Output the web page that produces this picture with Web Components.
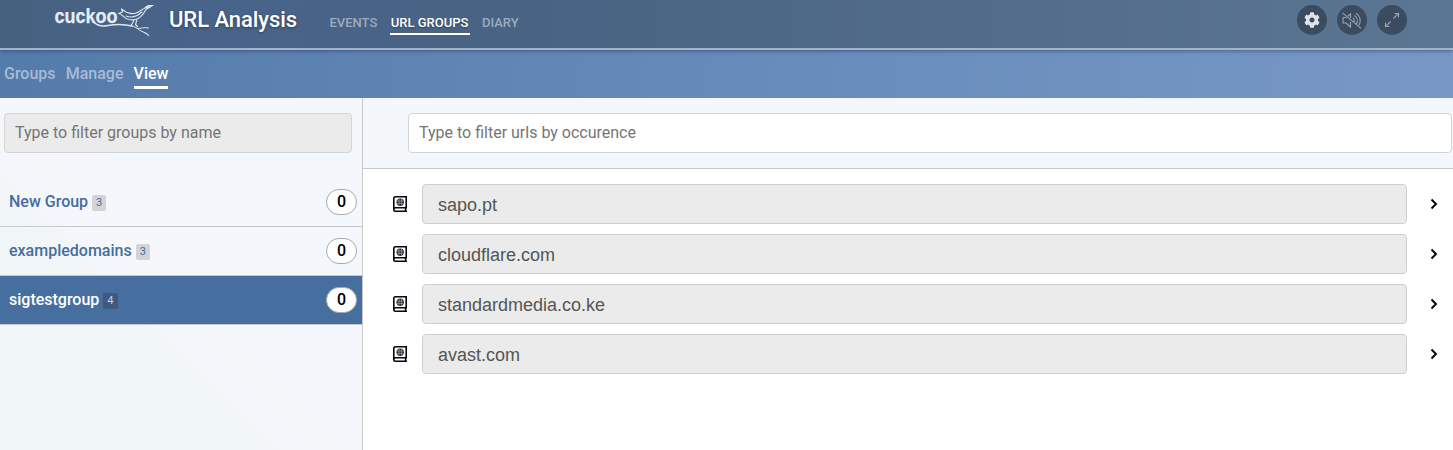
<!DOCTYPE html>
<html lang="en">
<head>
<meta charset="utf-8">
<title>URL Analysis</title>
<style>
html,body{height:100%;margin:0}
body{font-family:Roboto,"Liberation Sans",sans-serif;font-size:16px;overflow:hidden;background:#fff}
</style>
</head>
<body>
<url-analysis-app></url-analysis-app>
<script>
function define(name, html){
  customElements.define(name, class extends HTMLElement{
    constructor(){
      super();
      const t=document.createElement('template');
      t.innerHTML=html;
      this.attachShadow({mode:'open'}).append(t.content.cloneNode(true));
    }
  });
}

define('cuckoo-logo', `
<style>
:host{display:block;width:100px;height:40px;flex:none}
svg{display:block}
text{font:bold 19.5px "Liberation Sans",Arial,sans-serif;fill:#e4edf8;stroke:#e4edf8;stroke-width:.25}
path{fill:none;stroke:#dce7f4;stroke-linecap:round;stroke-linejoin:round}
</style>
<svg width="100" height="40" viewBox="54 0 100 40">
<text x="54.6" y="22.700" textLength="63" lengthAdjust="spacingAndGlyphs">cuckoo</text>
<path stroke-width="1.5" d="M93 21c4 5 9 5.800 15 4.500 8-1.500 16-1.500 24 .5"/>
<path stroke-width="1" d="M132 26c5 1 6 3.500 9 5 3 1.500 5 1.500 8 4.500M137 28.500c4 .5 7-2 11.500-.5M144 32.500c2 1 3 1 4 3"/>
<path stroke-width="1.100" d="M118.500 13.500l4-1.500-1-3 4.500 3c3 1 5 2 8.500 1.500 5-.8 7-4.500 11-5.500l7-2.500-6.500 4c-3 5.500-6 9-10.500 10-5 1-10-.5-12.500-3.500-1.500-1.500-2.500-2.500-4.500-2.500M126 16c5 2 11 .5 16-4M145 7.500l3.500-2 4.500 0M137 19.500l-1.500 5 2 2M134 20.500l-3 5"/>
</svg>`);

define('main-tab', `
<style>
:host{display:block;font-size:13px;font-weight:500;line-height:16px;color:#9cacc0;padding:0 1.300px 2px 1px;border-bottom:2px solid transparent;white-space:nowrap}
:host([active]){color:#fff;border-color:#fff;text-shadow:0 1px 2px #0005}
</style><slot></slot>`);

define('round-button', `
<style>
:host{display:flex;width:30px;height:30px;border-radius:50%;background:#3c4c60;align-items:center;justify-content:center}
</style><slot></slot>`);

define('app-header', `
<style>
:host{display:flex;box-sizing:border-box;height:50px;padding:0 46px 0 54px;border-bottom:2px solid #a5b2c8;background:linear-gradient(90deg,#46617f,#49648a 14%,#486383 35%,#516b89 65%,#5b7693);position:relative;box-shadow:0 1px 4px #203c6a99;z-index:1}
h1{margin:0 0 0 15px;font-size:22px;letter-spacing:-.05px;font-weight:500;line-height:40px;color:#fff;width:159.500px;white-space:nowrap;text-shadow:0 1px 3px #0006}
nav{display:flex;gap:11.200px;padding-top:15px;align-items:flex-start}
.tools{display:flex;gap:10px;margin-left:auto;padding-top:5px}
svg{display:block;fill:none;stroke:#9aa3b0;stroke-width:1.100}
</style>
<cuckoo-logo></cuckoo-logo>
<h1>URL Analysis</h1>
<nav><main-tab>EVENTS</main-tab><main-tab active>URL GROUPS</main-tab><main-tab>DIARY</main-tab></nav>
<div class="tools">
<round-button><svg width="16" height="16" viewBox="0 0 512 512"><path fill="#e0e4e9" stroke="none" d="M487.400 315.700l-42.600-24.600c4.300-23.200 4.300-47 0-70.200l42.600-24.600c4.900-2.800 7.100-8.600 5.500-14-11.100-35.600-30-67.800-54.700-94.600-3.800-4.100-10-5.100-14.800-2.300L380.800 110c-17.900-15.400-38.500-27.300-60.800-35.100V25.800c0-5.600-3.900-10.500-9.400-11.700-36.700-8.200-74.300-7.800-109.200 0-5.500 1.200-9.400 6.100-9.400 11.700V75c-22.200 7.900-42.800 19.800-60.800 35.100L88.700 85.500c-4.900-2.800-11-1.900-14.800 2.300-24.700 26.700-43.600 58.900-54.700 94.600-1.700 5.400.6 11.200 5.500 14L67.300 221c-4.300 23.200-4.300 47 0 70.200l-42.600 24.600c-4.900 2.800-7.100 8.600-5.500 14 11.100 35.600 30 67.800 54.700 94.600 3.800 4.100 10 5.100 14.800 2.300l42.600-24.600c17.900 15.400 38.500 27.300 60.800 35.100v49.200c0 5.600 3.900 10.500 9.400 11.700 36.700 8.200 74.300 7.800 109.200 0 5.500-1.200 9.400-6.100 9.400-11.700v-49.200c22.200-7.900 42.800-19.800 60.800-35.100l42.600 24.600c4.900 2.800 11 1.900 14.800-2.300 24.700-26.700 43.600-58.900 54.700-94.600 1.500-5.500-.7-11.300-5.600-14.100zM256 336c-44.100 0-80-35.900-80-80s35.900-80 80-80 80 35.900 80 80-35.900 80-80 80z"/></svg></round-button>
<round-button><svg width="20" height="17" viewBox="0 0 20 17"><path d="M1 5.500v5.500h3l4.500 4v-5M4.500 5.500H1M6 4l2.500-2v4M.5.8l18.500 15.500M11 6c1.500 1 1.500 3.500.5 4.500M12.500 3.500c3 1.800 3.500 5.500 2 8.500M14 1.200c4.300 2.500 5.300 8 3 12"/></svg></round-button>
<round-button><svg width="16" height="16" viewBox="0 0 16 16"><path d="M9.500 6.500L14.500 1.500M10.500 1.500h4v4M6.500 9.500l-5 5M1.500 10.500v4h4"/></svg></round-button>
</div>`);

define('sub-tab', `
<style>
:host{display:block;font-weight:500;line-height:20px;color:#a5bbd9;padding-bottom:2px;border-bottom:3px solid transparent}
:host([active]){color:#fff;border-color:#fff}
</style><slot></slot>`);

define('sub-nav', `
<style>
:host{display:flex;box-sizing:border-box;height:48px;padding:14px 4px 0;gap:10.100px;align-items:flex-start;background:linear-gradient(90deg,#557baa,#5f84b3 27%,#6b8fbe 65%,#7898c5)}
</style>
<sub-tab>Groups</sub-tab><sub-tab>Manage</sub-tab><sub-tab active>View</sub-tab>`);

define('filter-input', `
<style>
:host{display:block}
input{display:block;box-sizing:border-box;width:100%;height:40px;padding:0 10px 2px;border:1px solid #d3d4d6;border-radius:4px;background:var(--field,#fff);font:16px Roboto,sans-serif;color:#555;outline:0}
input::placeholder{color:#757575;opacity:1}
</style><input type="text">`);

define('group-row', `
<style>
:host{display:flex;box-sizing:border-box;height:49px;align-items:center;padding:0 5px 0 9px;border-bottom:1px solid #c7c8cc;color:#466d9e;font-weight:500}
:host([selected]){background:#466e9f;color:#fff}
.name{padding-bottom:1px}
.count{margin-left:4px;min-width:14px;height:16px;box-sizing:border-box;padding:0 4px;border-radius:2px;background:#d3d4d6;font-size:11px;line-height:15px;font-weight:400;margin-top:1px}
:host([selected]) .count{background:#3e5a7e;color:#c9d3df}
.hits{margin-left:auto;box-sizing:border-box;width:31px;height:26px;border:1px solid #aaa;border-radius:13px;background:#fff;color:#000;text-align:center;line-height:24px}
</style><span class="name"><slot></slot></span><span class="count"><slot name="count"></slot></span><span class="hits"><slot name="hits"></slot></span>`);

define('group-sidebar', `
<style>
:host{display:flex;flex-direction:column;box-sizing:border-box;width:363px;flex:none;border-right:1px solid #c7c8cc;background:linear-gradient(45deg,#f1f6f9 34%,#f5f7fb 46%,#f4f8fb)}
filter-input{margin:15px 10px 25px 4px;--field:#ebebeb}
</style>
<filter-input data-hint="Type to filter groups by name"></filter-input>
<group-row>New Group<span slot="count">3</span><span slot="hits">0</span></group-row>
<group-row>exampledomains<span slot="count">3</span><span slot="hits">0</span></group-row>
<group-row selected>sigtestgroup<span slot="count">4</span><span slot="hits">0</span></group-row>`);

define('url-row', `
<style>
:host{display:flex;align-items:center;height:40px}
.book{display:block;width:14px;height:16px;margin-right:15px;flex:none}
.url{flex:1;box-sizing:border-box;height:40px;border:1px solid #cfcfcf;border-radius:4px;background:#ebebeb;padding:1px 15px 0;line-height:38px;font-family:"Liberation Sans",Arial,sans-serif;font-size:18px;color:#555}
.go{display:block;margin:0 15px 0 23px;flex:none}
</style>
<svg class="book" viewBox="0 0 14 16" fill="none" stroke="#050510"><path stroke-width="1.600" d="M13.200 11.750V.8H2.500Q.8.800.8 2.500v11Q.8 15.200 2.500 15.200H14M.8 13.500q0-1.750 1.700-1.750h11.500M12.600 11.750v3.500"/><circle cx="7.200" cy="6.200" r="3.700" fill="#25252f" stroke="none"/><path stroke="#b8b8c0" stroke-width=".6" d="M4 5h6.500M4 7.400h6.500M6 3v6.400M8.500 3v6.400"/></svg>
<div class="url"><slot></slot></div>
<svg class="go" width="8" height="12" viewBox="0 0 8 12" fill="none" stroke="#000" stroke-width="1.900"><path d="M1.500 1.500L6 6 1.500 10.500"/></svg>`);

define('url-panel', `
<style>
:host{display:block;flex:1;min-width:0;background:#fff}
header{box-sizing:border-box;height:71px;padding:15px 1px 0 45px;border-bottom:1px solid #c7c8cc;background:#f4f8fb}
.list{display:flex;flex-direction:column;gap:10px;padding:15px 0 0 30px}
</style>
<header><filter-input data-hint="Type to filter urls by occurence"></filter-input></header>
<div class="list"><url-row>sapo.pt</url-row><url-row>cloudflare.com</url-row><url-row>standardmedia.co.ke</url-row><url-row>avast.com</url-row></div>`);

define('url-analysis-app', `
<style>
:host{display:flex;flex-direction:column;height:100vh}
main{display:flex;flex:1;min-height:0}
</style>
<app-header></app-header><sub-nav></sub-nav>
<main><group-sidebar></group-sidebar><url-panel></url-panel></main>`);

const app=document.querySelector('url-analysis-app').shadowRoot;
for(const name of ['group-sidebar','url-panel']){
  const field=app.querySelector(name).shadowRoot.querySelector('filter-input');
  field.shadowRoot.querySelector('input').placeholder=field.dataset.hint;
}
</script>
</body>
</html>
